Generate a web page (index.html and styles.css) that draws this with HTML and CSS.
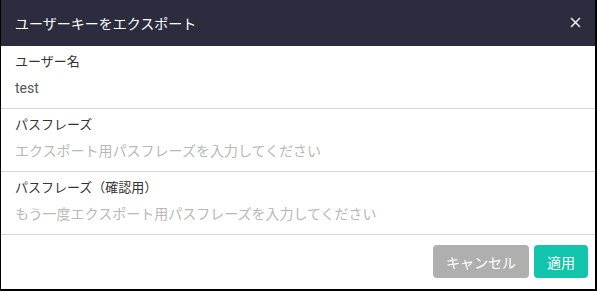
FILE: index.html
```html
<!DOCTYPE html>
<html lang="ja">
<head>
  <meta charset="UTF-8" />
  <title>ユーザーキーをエクスポート</title>
  <link rel="stylesheet" href="styles.css">
</head>
<body>
  <div class="dialog">
    <div class="dialog-header">
      <span class="dialog-title">ユーザーキーをエクスポート</span>
      <button class="close-btn" aria-label="閉じる">
        <svg width="11" height="11" viewBox="0 0 11 11">
          <path d="M1 1 L10 10 M10 1 L1 10" stroke="#fff" stroke-width="1.4" fill="none" />
        </svg>
      </button>
    </div>

    <div class="field">
      <label class="field-label">ユーザー名</label>
      <input class="field-input" value="test" readonly>
    </div>
    <div class="field">
      <label class="field-label">パスフレーズ</label>
      <input class="field-input" type="password" placeholder="エクスポート用パスフレーズを入力してください">
    </div>
    <div class="field">
      <label class="field-label">パスフレーズ（確認用）</label>
      <input class="field-input" type="password" placeholder="もう一度エクスポート用パスフレーズを入力してください">
    </div>

    <div class="dialog-footer">
      <button class="btn btn-cancel">キャンセル</button>
      <button class="btn btn-apply">適用</button>
    </div>
  </div>
</body>
</html>
```

FILE: styles.css
```css
body {
  margin: 0;
  background: #000;
  font-family: Roboto, "Noto Sans CJK JP", sans-serif;
}
.dialog {
  margin: 0 2px 2px 1px;
  width: 594px;
  height: 289px;
  background: #fff;
  display: flex;
  flex-direction: column;
}
.dialog-header {
  height: 46px;
  background: #2b2c3e;
  display: flex;
  align-items: center;
  justify-content: space-between;
  padding: 0 14px 1px 14px;
  box-sizing: border-box;
}
.dialog-title {
  color: #fff;
  font-size: 14px;
}
.close-btn {
  background: none;
  border: none;
  padding: 0;
  width: 11px;
  height: 11px;
  display: flex;
  cursor: pointer;
}
.field {
  display: flex;
  flex-direction: column;
  gap: 6px;
  padding: 6px 14px 10px 14px;
  border-bottom: 1px solid #d6d6d6;
}
.field-label {
  font-size: 13px;
  line-height: 20px;
  color: #333;
}
.field-input {
  border: none;
  outline: none;
  padding: 0;
  height: 20px;
  font-family: inherit;
  font-size: 14px;
  color: #555;
  background: transparent;
}
.field-input::placeholder {
  color: #b8b8b8;
}
.dialog-footer {
  display: flex;
  justify-content: flex-end;
  gap: 5px;
  padding: 10px 7px 0 0;
}
.btn {
  height: 33px;
  border: none;
  border-radius: 4px;
  color: #fff;
  font-family: inherit;
  font-size: 14px;
  padding: 0 12px;
  cursor: pointer;
}
.btn-cancel {
  background: #afafaf;
  width: 96px;
}
.btn-apply {
  background: #13c4ac;
  width: 54px;
}
```
